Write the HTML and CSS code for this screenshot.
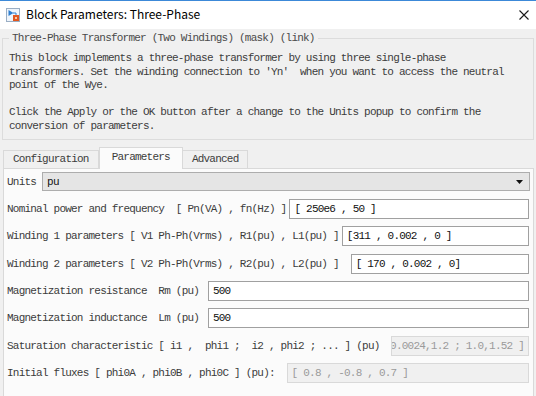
FILE: index.html
```html
<!DOCTYPE html>
<html>
<head>
<meta charset="utf-8">
<title>Block Parameters: Three-Phase</title>
<link rel="stylesheet" href="styles.css">
</head>
<body>
<div class="window">
  <header class="titlebar">
    <svg class="app-icon" width="14" height="14" viewBox="0 0 14 14">
      <rect x="0.5" y="0.5" width="13" height="13" fill="#eef4fb" stroke="#9aaec4"/>
      <path d="M2.5 2v6l5-3z" fill="#2f7fd0"/>
      <path d="M7 5h3v2" fill="none" stroke="#2f7fd0" stroke-width="1"/>
      <rect x="7" y="7" width="6" height="6" fill="#e2571e"/>
      <rect x="9" y="9" width="2" height="2" fill="#f7c7a8"/>
    </svg>
    <span class="title">Block Parameters: Three-Phase</span>
    <svg class="close" width="10" height="10" viewBox="0 0 10 10">
      <path d="M0.5 0.5L9.5 9.5M9.5 0.5L0.5 9.5" stroke="#1a1a1a" stroke-width="1.1" fill="none"/>
    </svg>
  </header>
  <main class="content">
    <section class="group mono">
      <div class="legend">Three-Phase Transformer (Two Windings) (mask) (link)</div>
<p class="desc">This block implements a three-phase transformer by using three single-phase
transformers. Set the winding connection to 'Yn'  when you want to access the neutral
point of the Wye.

Click the Apply or the OK button after a change to the Units popup to confirm the
conversion of parameters.</p>
    </section>
    <nav class="tabs mono">
      <div class="tab">Configuration</div>
      <div class="tab active">Parameters</div>
      <div class="tab">Advanced</div>
    </nav>
    <section class="panel mono">
      <div class="units-row">
        <span class="label">Units</span>
        <div class="select">
          <span class="select-value">pu</span>
          <svg class="arrow" width="7" height="4" viewBox="0 0 7 4"><path d="M0 0h7L3.5 4z" fill="#111"/></svg>
        </div>
      </div>
      <div class="fields">
        <div class="row"><span class="label">Nominal power and frequency  [ Pn(VA) , fn(Hz) ]</span><div class="input">[ 250e6 , 50 ]</div></div>
        <div class="row"><span class="label">Winding 1 parameters [ V1 Ph-Ph(Vrms) , R1(pu) , L1(pu) ]</span><div class="input">[311 , 0.002 , 0 ]</div></div>
        <div class="row wide"><span class="label">Winding 2 parameters [ V2 Ph-Ph(Vrms) , R2(pu) , L2(pu) ] </span><div class="input">[ 170 , 0.002 , 0]</div></div>
        <div class="row"><span class="label">Magnetization resistance  Rm (pu) </span><div class="input">500</div></div>
        <div class="row"><span class="label">Magnetization inductance  Lm (pu) </span><div class="input">500</div></div>
        <div class="row wide"><span class="label">Saturation characteristic [ i1 ,  phi1 ;  i2 , phi2 ; ... ] (pu) </span><div class="input disabled scrolled"><span>0.0024,1.2 ; 1.0,1.52 ]</span></div></div>
        <div class="row wide"><span class="label">Initial fluxes [ phi0A , phi0B , phi0C ] (pu): </span><div class="input disabled">[ 0.8 , -0.8 , 0.7 ]</div></div>
      </div>
    </section>
  </main>
</div>
</body>
</html>
```

FILE: styles.css
```css
html, body {
  margin: 0;
  padding: 0;
}

body {
  width: 536px;
  height: 396px;
  overflow: hidden;
  background: #f0f0f0;
  font-family: "Liberation Mono", monospace;
}

.window {
  display: flex;
  flex-direction: column;
  height: 396px;
}

.mono {
  font-family: "Liberation Mono", monospace;
  font-size: 11px;
  letter-spacing: -0.78px;
}

/* Title bar */
.titlebar {
  flex: none;
  height: 28px;
  border-top: 1px solid #3c89d8;
  background: #ffffff;
  display: flex;
  align-items: center;
  padding: 0 7px 0 6px;
}

.app-icon {
  flex: none;
}

.title {
  flex: 1;
  margin-left: 6px;
  font-family: "Noto Sans CJK SC", "Noto Sans", sans-serif;
  font-size: 12px;
  color: #000;
  line-height: 16px;
  margin-top: -2px;
}

.close {
  flex: none;
}

/* Content */
.content {
  flex: 1;
  min-height: 0;
  display: flex;
  flex-direction: column;
}

.group {
  margin: 9px 2px 0 2px;
  border: 1px solid #dcdcdc;
  padding: 0 6px 6px 6px;
  color: #3c3c3c;
}

.legend {
  display: table;
  margin: -8px 0 0 0;
  padding: 0 3px;
  background: #f0f0f0;
  line-height: 14px;
  white-space: pre;
  color: #4a4a4a;
}

.desc {
  margin: 7px 0 0 0;
  line-height: 13.5px;
  white-space: pre;
}

/* Tabs */
.tabs {
  flex: none;
  display: flex;
  align-items: flex-end;
  height: 21px;
  margin-top: 7px;
  padding-left: 3px;
  color: #3c3c3c;
}

.tab {
  box-sizing: border-box;
  height: 18px;
  padding: 0 9px;
  border: 1px solid #d9d9d9;
  border-bottom: none;
  background: #f0f0f0;
  line-height: 17px;
  white-space: pre;
}

.tab + .tab {
  border-left: none;
}

.tab.active {
  height: 22px;
  margin-bottom: -1px;
  padding: 0 12px;
  background: #fbfbfb;
  border-left: 1px solid #d9d9d9;
  line-height: 19px;
  position: relative;
  z-index: 1;
}

/* Panel */
.panel {
  flex: 1;
  margin: 0 2px 0 3px;
  border: 1px solid #d9d9d9;
  border-bottom: none;
  background: #fbfbfb;
  padding: 3px 3px 0 3px;
  color: #3c3c3c;
}

.units-row {
  display: flex;
  align-items: center;
  gap: 6px;
  height: 19px;
}

.label {
  flex: none;
  white-space: pre;
  color: #3c3c3c;
}

.select {
  flex: 1;
  box-sizing: border-box;
  height: 19px;
  border: 1px solid #adadad;
  background: #e5e5e5;
  display: flex;
  align-items: center;
  padding: 0 6px 0 4px;
  color: #111;
}

.select-value {
  flex: 1;
}

.arrow {
  flex: none;
}

.fields {
  margin-top: 8px;
  display: flex;
  flex-direction: column;
  gap: 7.33px;
  padding-right: 1px;
}

.row {
  display: flex;
  align-items: center;
  gap: 3px;
  height: 20px;
}

.row.wide {
  gap: 6px;
}

.input {
  flex: 1;
  min-width: 0;
  box-sizing: border-box;
  height: 20px;
  border: 1px solid #a0a0a0;
  background: #ffffff;
  padding: 0 4px;
  display: flex;
  align-items: center;
  white-space: pre;
  overflow: hidden;
  color: #111;
}

.input.disabled {
  background: #f0f0f0;
  border-color: #d9d9d9;
  color: #9a9a9a;
}

.input.scrolled {
  justify-content: flex-end;
  padding: 0 4px 0 2px;
}

.input.scrolled span {
  flex: none;
}
```
